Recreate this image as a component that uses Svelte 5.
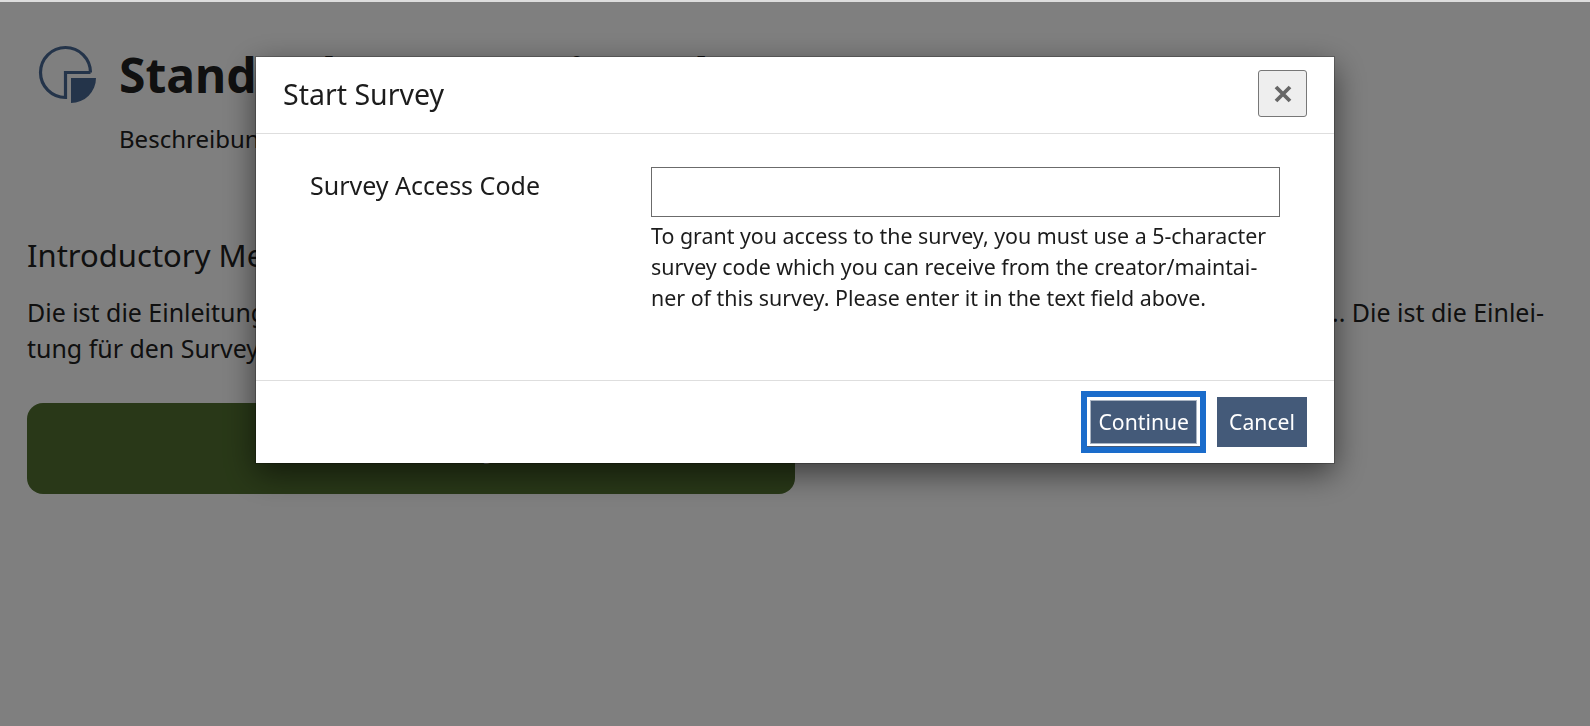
<script>
  let code = $state('');
</script>

<main class="page">
  <header class="head">
    <svg class="logo" viewBox="0 0 60 60" aria-hidden="true">
      <path d="M52.5 27.5A25 25 0 1 0 27.5 52.5V27.5H52.5" fill="none" stroke="#486894" stroke-width="3.2" />
      <path d="M33 33H58A25 25 0 0 1 33 58Z" fill="#486894" />
    </svg>
    <div>
      <h1>Standard Survey mit Code</h1>
      <p class="sub">Beschreibung des Surveys</p>
    </div>
  </header>
  <section class="intro">
    <h2>Introductory Message</h2>
    <p>Die ist die Einleitung für den Survey... Die ist die Einleitung für den Survey... Die ist die Einleitung für den Survey... Die ist die Ein&shy;lei&shy;tung für den Survey...</p>
    <button class="start">Start Survey</button>
  </section>
</main>

<div class="overlay"></div>

<div class="modal" role="dialog" aria-labelledby="modal-title">
  <div class="modal-head">
    <h3 id="modal-title">Start Survey</h3>
    <button class="close" aria-label="Close">
      <svg viewBox="0 0 18 18" aria-hidden="true"><path d="M2 2L16 16M16 2L2 16" stroke="#666" stroke-width="3.8" /></svg>
    </button>
  </div>
  <div class="modal-body">
    <label for="code">Survey Access Code</label>
    <div class="field">
      <input id="code" bind:value={code} />
      <p class="help">To grant you access to the survey, you must use a 5-character survey code which you can receive from the creator/maintai&shy;ner of this survey. Please enter it in the text field above.</p>
    </div>
  </div>
  <div class="modal-foot">
    <button class="action focused">Continue</button>
    <button class="action">Cancel</button>
  </div>
</div>

<style>
  :global(body) {
    margin: 0;
    background: #fff;
    font-family: "Noto Sans", "Open Sans", sans-serif;
    color: #212121;
    overflow: hidden;
  }
  .page {
    box-sizing: border-box;
    height: 726px;
    padding: 0 27px;
    border-top: 2px solid #ddd;
  }
  .head {
    display: flex;
    gap: 21px;
    padding: 43px 0 0 11px;
  }
  .logo {
    width: 60px;
    height: 60px;
    flex: none;
  }
  h1 {
    margin: 0;
    font-size: 48px;
    line-height: 60px;
    font-weight: 700;
    white-space: nowrap;
  }
  .sub {
    margin: 17px 0 0;
    font-size: 24px;
    line-height: 33px;
    white-space: nowrap;
  }
  .intro {
    margin-top: 79px;
  }
  h2 {
    margin: 0;
    font-size: 31px;
    line-height: 42px;
    font-weight: 400;
  }
  .intro p {
    margin: 19px 0 0;
    font-size: 24.95px;
    line-height: 35.5px;
  }
  .start {
    display: block;
    width: 768px;
    height: 91px;
    margin-top: 37px;
    padding: 0 0 9px;
    border: 0;
    border-radius: 16px;
    background: #527130;
    color: #fff;
    font: 400 31.5px "Noto Sans", sans-serif;
  }
  .overlay {
    position: fixed;
    inset: 2px 0 0;
    background: rgba(0, 0, 0, 0.5);
  }
  .modal {
    position: fixed;
    left: 256px;
    top: 57px;
    box-sizing: border-box;
    width: 1078px;
    height: 406px;
    display: flex;
    flex-direction: column;
    background: #fff;
    box-shadow: 0 0 0 1px rgba(0, 0, 0, 0.22), 0 10px 30px rgba(0, 0, 0, 0.55);
  }
  .modal-head {
    box-sizing: border-box;
    height: 77px;
    flex: none;
    display: flex;
    align-items: flex-start;
    justify-content: space-between;
    padding: 13px 27px 0;
    border-bottom: 1px solid #dedede;
  }
  h3 {
    margin: 1px 0 0;
    font-size: 28.5px;
    line-height: 46px;
    font-weight: 400;
    color: #1c1c1c;
  }
  .close {
    box-sizing: border-box;
    width: 49px;
    height: 47px;
    padding: 0;
    display: flex;
    align-items: center;
    justify-content: center;
    background: #eee;
    border: 1px solid #777;
    border-radius: 3px;
  }
  .close svg {
    width: 18px;
    height: 18px;
  }
  .modal-body {
    flex: 1;
    display: flex;
    padding: 33px 54px 0;
    color: #1c1c1c;
  }
  label {
    width: 341px;
    flex: none;
    font-size: 25px;
    line-height: 36px;
  }
  .field {
    flex: 1;
  }
  input {
    display: block;
    box-sizing: border-box;
    width: 629px;
    height: 50px;
    border: 1px solid #6b6b6b;
    background: #fff;
    outline: none;
  }
  .help {
    margin: 3px 0 0;
    width: 629px;
    font-size: 21.4px;
    line-height: 31px;
  }
  .modal-foot {
    box-sizing: border-box;
    height: 83px;
    flex: none;
    display: flex;
    justify-content: flex-end;
    align-items: flex-start;
    gap: 17px;
    padding: 16px 27px 0;
    border-top: 1px solid #dedede;
  }
  .action {
    box-sizing: border-box;
    height: 50px;
    padding: 0 12px 2px;
    border: 0;
    background: #445a79;
    color: #fff;
    font: 400 21.2px "Noto Sans", sans-serif;
  }
  .focused {
    padding: 0 11px 2px;
    outline: 6px solid #1a6ccb;
    box-shadow: inset 0 -1px 0 #445a79, inset 0 0 0 3px #fff, inset 0 0 0 4px #aab4c2;
  }
</style>
